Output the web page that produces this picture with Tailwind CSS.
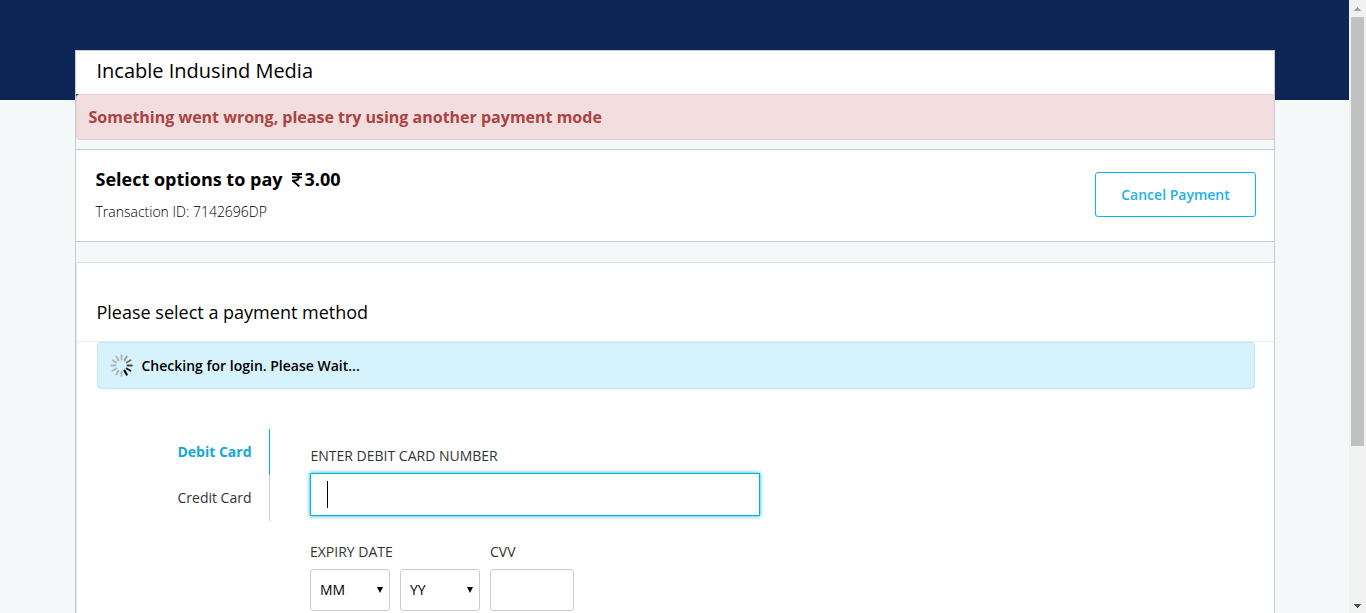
<!DOCTYPE html>
<html lang="en">
<head>
<meta charset="utf-8">
<title>Payment</title>
<script src="https://cdn.jsdelivr.net/npm/@tailwindcss/browser@4"></script>
</head>
<body class="h-[613px] overflow-hidden bg-[#f4f8f9] font-['Open_Sans',sans-serif] text-black">
<div class="flex h-[613px]">
  <div class="h-[613px] flex-1 overflow-hidden bg-[linear-gradient(#0e2656_100px,#f4f8f9_100px)] pt-[50px] pl-[75px]">
    <main class="h-[700px] w-[1200px] border border-[#c8cccf]">
      <header class="h-[43px] bg-white pl-[20.500px] text-[20px] leading-[40px] whitespace-nowrap">Incable Indusind Media</header>
      <div class="bg-[linear-gradient(#0e2656_6px,#f4f8f9_6px)] pb-[9px]">
        <div class="h-[46px] rounded-l-[4px] border border-r-0 border-[#ebccd1] bg-[#f2dede] pl-[11.500px] text-[16px] leading-[44px] font-bold whitespace-nowrap text-[#a94442]">Something went wrong, please try using another payment mode</div>
      </div>
      <section class="flex h-[93px] justify-between border-y border-[#c8cccf] bg-white pr-[18px] pl-[19.500px]">
        <div class="whitespace-nowrap">
          <h1 class="mt-[16px] flex items-center text-[18px] leading-[27px] font-bold">Select options to pay
            <svg class="mr-[3px] ml-[9px]" width="10" height="14" viewBox="0 0 10 14" fill="none" stroke="#000" stroke-width="1.8"><path d="M0 1h10M0 4.3h10M2 1c6.500 0 6.500 6.600 0 6.600H.7L7.300 13.400"/></svg>3.00</h1>
          <p class="mt-[9px] text-[14px] leading-5 font-light">Transaction ID: 7142696DP</p>
        </div>
        <button class="mt-[22px] h-[45px] w-[161px] rounded-[3px] border border-[#00b9f5] text-[14px] font-semibold text-[#20b0ee]">Cancel Payment</button>
      </section>
      <section class="mt-[20px] h-[500px] border-t border-l border-[#dde7ea] bg-white">
        <h2 class="h-[79px] border-b border-[#ececec] pt-[36px] pl-[19.500px] text-[18px] leading-[27px] whitespace-nowrap">Please select a payment method</h2>
        <div class="ml-[20px] flex h-[47px] w-[1158px] items-center rounded-[4px] border border-[#bce8f1] bg-[#d6f2fd] pl-[11.500px] text-[14px] font-semibold">
          <svg class="mr-[9px]" width="23" height="23" viewBox="-11.500 -11.500 23 23" stroke-width="1.900" stroke-linecap="round">
            <path stroke="#b4b6b7" d="M0-6V-10.300"/><path stroke="#9b9d9e" d="M3-5.200L5.200-9"/><path stroke="#707273" d="M5.200-3L9-5.200"/><path stroke="#444" d="M6 0H10.300"/><path stroke="#222" d="M5.200 3L9 5.200"/><path stroke="#000" stroke-width="2.200" d="M3 5.200L5.200 9"/><path stroke="#b4b6b7" d="M0 6V10.300M-3 5.200L-5.200 9M-5.200 3L-9 5.200M-6 0H-10.300M-5.200-3L-9-5.200M-3-5.200L-5.200-9"/>
          </svg>Checking for login. Please Wait...</div>
        <div class="mt-[40px] flex text-[14px] whitespace-nowrap text-[#333]">
          <nav class="w-[193px] text-right leading-[46px]">
            <div class="h-[46px] border-r border-[#00b0dc] pr-[17.500px] font-bold text-[#12a8dc]">Debit Card</div>
            <div class="h-[46px] border-r border-[#ccc] pr-[17.500px]">Credit Card</div>
          </nav>
          <form class="ml-[40px] pt-[17px]">
            <div class="pl-[0.500px] leading-[20px]">ENTER DEBIT CARD NUMBER</div>
            <div class="mt-[7px] h-[43px] w-[450px] border border-[#00b0dc] pt-[7px] pl-[16px] shadow-[0_0_4px_#00b0dc]"><div class="h-[27px] w-px bg-black"></div></div>
            <div class="mt-[26px] flex gap-[10px] leading-[20px]">
              <div>
                <div>EXPIRY DATE</div>
                <div class="mt-[7px] flex gap-[10px] leading-[40px] text-black">
                  <div class="flex h-[42px] w-[80px] items-center justify-between rounded-[3px] border border-[#ccc] pr-[6px] pl-[9px]">MM<svg width="6" height="6" viewBox="0 0 6 6"><path d="M0 0h6L3 6z"/></svg></div>
                  <div class="flex h-[42px] w-[80px] items-center justify-between rounded-[3px] border border-[#ccc] pr-[6px] pl-[9px]">YY<svg width="6" height="6" viewBox="0 0 6 6"><path d="M0 0h6L3 6z"/></svg></div>
                </div>
              </div>
              <div>
                <div>CVV</div>
                <div class="mt-[7px] h-[42px] w-[84px] rounded-[3px] border border-[#ccc]"></div>
              </div>
            </div>
          </form>
        </div>
      </section>
    </main>
  </div>
  <aside class="flex h-[613px] w-[17px] flex-col items-center bg-[#f1f1f1] pt-[7px] pb-[5px]">
    <svg width="7" height="4" viewBox="0 0 7 4" fill="#a3a3a3" shape-rendering="crispEdges"><path d="M3 0h1v1h1v1h1v1h1v1H0V3h1V2h1V1h1z"/></svg>
    <div class="mt-[6px] h-[429px] w-[13px] bg-[#c1c1c1]"></div>
    <svg class="mt-auto" width="7" height="4" viewBox="0 0 7 4" fill="#505050" shape-rendering="crispEdges"><path d="M3 4h1V3h1V2h1V1h1V0H0v1h1v1h1v1h1z"/></svg>
  </aside>
</div>
</body>
</html>
